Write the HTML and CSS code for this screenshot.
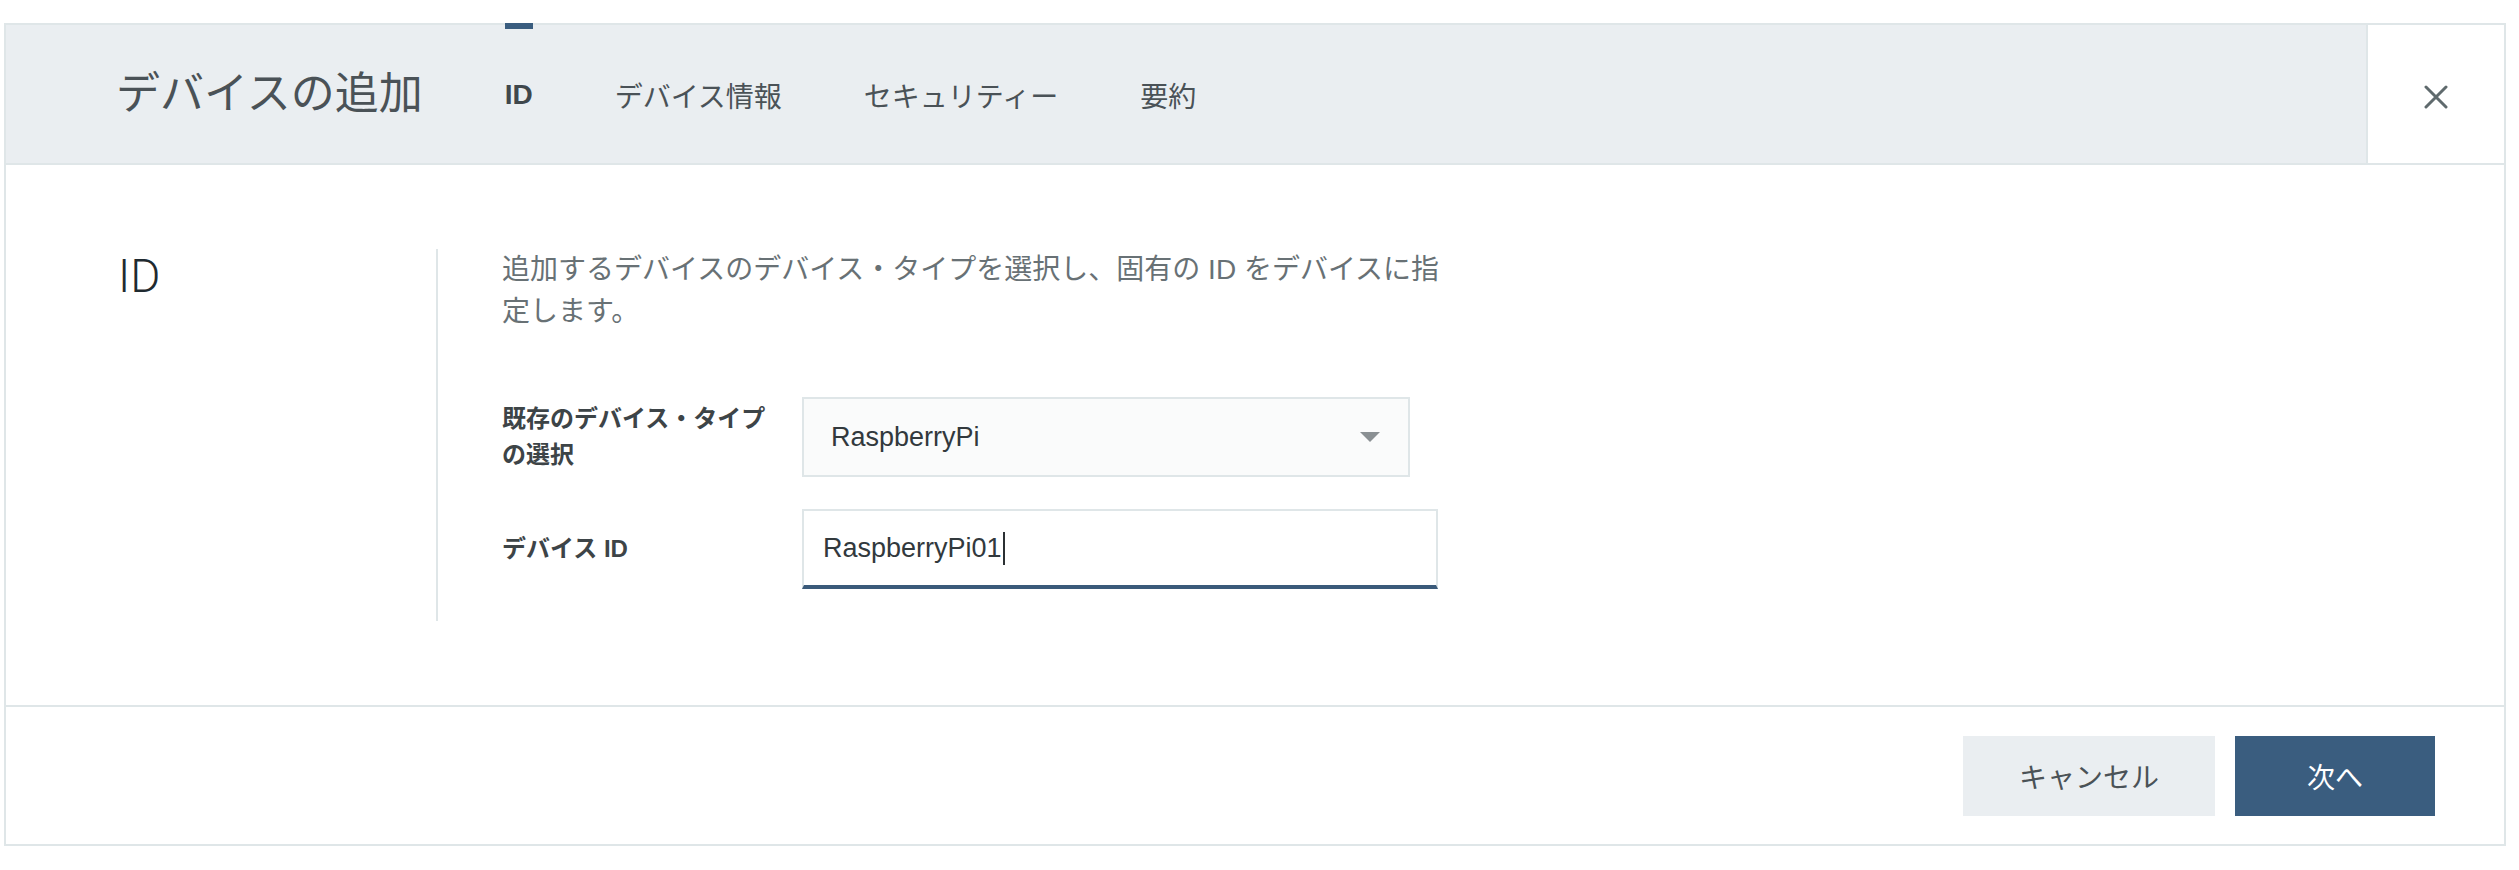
FILE: index.html
```html
<!DOCTYPE html>
<html lang="ja">
<head>
<meta charset="utf-8">
<title>デバイスの追加</title>
<link rel="stylesheet" href="styles.css">
</head>
<body>
<div class="dialog">
  <header class="dlg-header">
    <h1 class="dlg-title">デバイスの追加</h1>
    <nav class="tabs">
      <span class="tab active">ID</span>
      <span class="tab">デバイス情報</span>
      <span class="tab">セキュリティー</span>
      <span class="tab">要約</span>
    </nav>
    <button class="close" type="button" aria-label="閉じる">
      <svg width="24" height="24" viewBox="0 0 24 24"><path d="M2 2 L22 22 M22 2 L2 22" stroke="#5f6a6d" stroke-width="3" stroke-linecap="round" fill="none"/></svg>
    </button>
  </header>
  <main class="dlg-body">
    <div class="section-title">ID</div>
    <div class="section-content">
      <p class="desc">追加するデバイスのデバイス・タイプを選択し、固有の ID をデバイスに指定します。</p>
      <div class="form-row first">
        <label class="label">既存のデバイス・タイプの選択</label>
        <div class="select">
          <span>RaspberryPi</span>
          <svg width="20" height="10" viewBox="0 0 20 10"><path d="M0 0 H20 L10 10 Z" fill="#8a9093"/></svg>
        </div>
      </div>
      <div class="form-row">
        <label class="label">デバイス ID</label>
        <div class="input"><span>RaspberryPi01</span><span class="caret"></span></div>
      </div>
    </div>
  </main>
  <footer class="dlg-footer">
    <button class="btn btn-secondary" type="button">キャンセル</button>
    <button class="btn btn-primary" type="button">次へ</button>
  </footer>
</div>
</body>
</html>
```
FILE: styles.css
```css
* { box-sizing: border-box; }
html, body { margin: 0; padding: 0; background: #ffffff; }
body {
  font-family: "Liberation Sans", "Noto Sans CJK JP", sans-serif;
  color: #4a5257;
}
.dialog {
  margin: 23px 0 0 4px;
  width: 2502px;
  border: 2px solid #dfe6e8;
  background: #ffffff;
}
.dlg-header {
  display: flex;
  align-items: center;
  height: 140px;
  background: #eaeef1;
  border-bottom: 2px solid #dfe6e8;
  padding-left: 110px;
}
.dlg-title {
  margin: 0 82px 0 0;
  font-size: 44px;
  font-weight: 400;
  line-height: 1;
  color: #4a5257;
}
.tabs {
  display: flex;
  align-self: stretch;
  gap: 82px;
}
.tab {
  position: relative;
  display: flex;
  align-items: center;
  font-size: 28px;
  color: #4a5257;
  padding-top: 2px;
}
.tab.active { font-weight: 700; color: #3f474c; }
.tab.active::before {
  content: "";
  position: absolute;
  top: -2px;
  left: 0;
  right: 0;
  height: 6px;
  background: #3a5d7f;
}
.close {
  margin-left: auto;
  align-self: stretch;
  width: 138px;
  border: none;
  border-left: 2px solid #dfe6e8;
  background: #ffffff;
  display: flex;
  align-items: center;
  justify-content: center;
  padding: 6px 0 0 0;
  cursor: pointer;
}
.dlg-body {
  display: flex;
  padding: 84px 0 84px 112px;
}
.section-title {
  width: 318px;
  padding-top: 4px;
  font-family: Roboto, "Liberation Sans", sans-serif;
  font-weight: 300;
  font-size: 46px;
  line-height: 1;
  color: #1f2a30;
}
.section-content {
  border-left: 2px solid #dfe6e8;
  padding-left: 64px;
  padding-bottom: 32px;
}
.desc {
  margin: 0;
  width: 950px;
  font-size: 28px;
  line-height: 42px;
  color: #687175;
}
.form-row {
  display: grid;
  grid-template-columns: 300px auto;
  align-items: center;
  margin-top: 32px;
}
.form-row.first { margin-top: 64px; }
.label {
  padding-right: 24px;
  font-size: 24px;
  font-weight: 700;
  line-height: 36px;
  color: #3d4447;
}
.select {
  width: 608px;
  height: 80px;
  display: flex;
  align-items: center;
  justify-content: space-between;
  padding: 0 28px 0 27px;
  border: 2px solid #dfe6e8;
  background: #fafbfb;
  font-size: 27px;
  color: #32393d;
}
.input {
  width: 636px;
  height: 80px;
  display: flex;
  align-items: center;
  padding: 0 0 0 19px;
  border: 2px solid #dfe6e8;
  border-bottom: 4px solid #3a5a7a;
  background: #ffffff;
  font-size: 27px;
  color: #32393d;
}
.caret {
  display: inline-block;
  width: 2px;
  height: 33px;
  margin-left: 1px;
  background: #2b3033;
}
.dlg-footer {
  display: flex;
  justify-content: flex-end;
  align-items: center;
  gap: 20px;
  height: 139px;
  border-top: 2px solid #dfe6e8;
  padding-right: 69px;
}
.btn {
  height: 80px;
  border: none;
  font-family: "Liberation Sans", "Noto Sans CJK JP", sans-serif;
  font-size: 28px;
  cursor: pointer;
}
.btn-secondary { width: 252px; background: #eaeef1; color: #4a5257; }
.btn-primary { width: 200px; background: #3a5d7f; color: #ffffff; }
```
